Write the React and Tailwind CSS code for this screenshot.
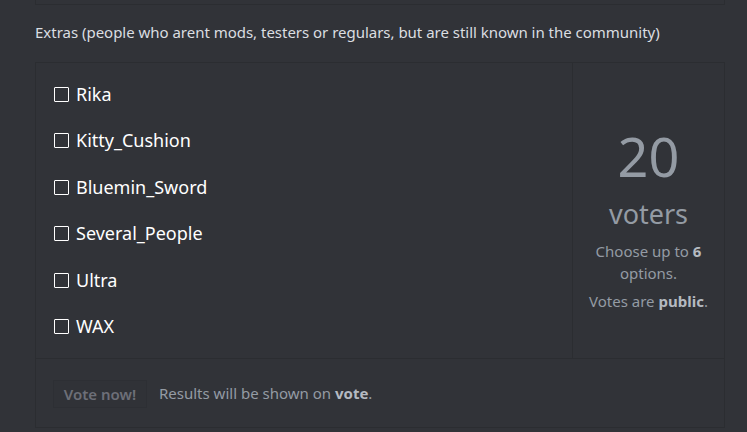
import React from 'react';

const options = ['Rika', 'Kitty_Cushion', 'Bluemin_Sword', 'Several_People', 'Ultra', 'WAX'];

const App = () => {
  return (
    <div className="w-[747px] h-[432px] overflow-hidden bg-[#313338] font-['Noto_Sans',sans-serif]">
      <div className="ml-[35px] w-[690px] h-[5px] border-x border-b border-[#2b2d31]" />
      <div className="pl-[35px] pt-[16px] h-[57px] text-[15px] text-[#dbdee1] tracking-[-0.02px]">
        Extras (people who arent mods, testers or regulars, but are still known in the community)
      </div>
      <div className="ml-[35px] w-[690px] h-[366px] border border-[#2b2d31] flex flex-col">
        <div className="flex h-[296px] border-b border-[#2b2d31]">
          <div className="flex-1 flex flex-col pt-[8px] pl-[18px]">
            {options.map(o => (
              <label key={o} className="flex items-center h-[46.5px] text-[18px] text-white">
                <span className="w-[15px] h-[15px] border-[1.5px] border-white rounded-[1px] mr-[7px]" />
                {o}
              </label>
            ))}
          </div>
          <div className="w-[152px] border-l border-[#2b2d31] flex flex-col items-center pt-[61px] text-[#949ba4]">
            <div className="text-[54px] leading-[64px]">20</div>
            <div className="text-[27px] leading-[36px] mt-[8px]">voters</div>
            <div className="text-[15px] leading-[22px] text-center mt-[8px] px-2">
              Choose up to <b className="text-[#b5bac1]">6</b> options.
            </div>
            <div className="text-[15px] leading-[22px] mt-[6px]">
              Votes are <b className="text-[#b5bac1]">public</b>.
            </div>
          </div>
        </div>
        <div className="flex items-center pl-[17px]">
          <div className="mt-[21px] h-[28px] w-[94px] flex items-center justify-center bg-[#303237] border border-[#2d2f34] text-[15px] font-semibold text-[#6d6f78]">
            Vote now!
          </div>
          <div className="mt-[19px] ml-[12px] text-[15px] text-[#949ba4]">
            Results will be shown on <b className="text-[#b5bac1]">vote</b>.
          </div>
        </div>
      </div>
    </div>
  );
};

export default App;
